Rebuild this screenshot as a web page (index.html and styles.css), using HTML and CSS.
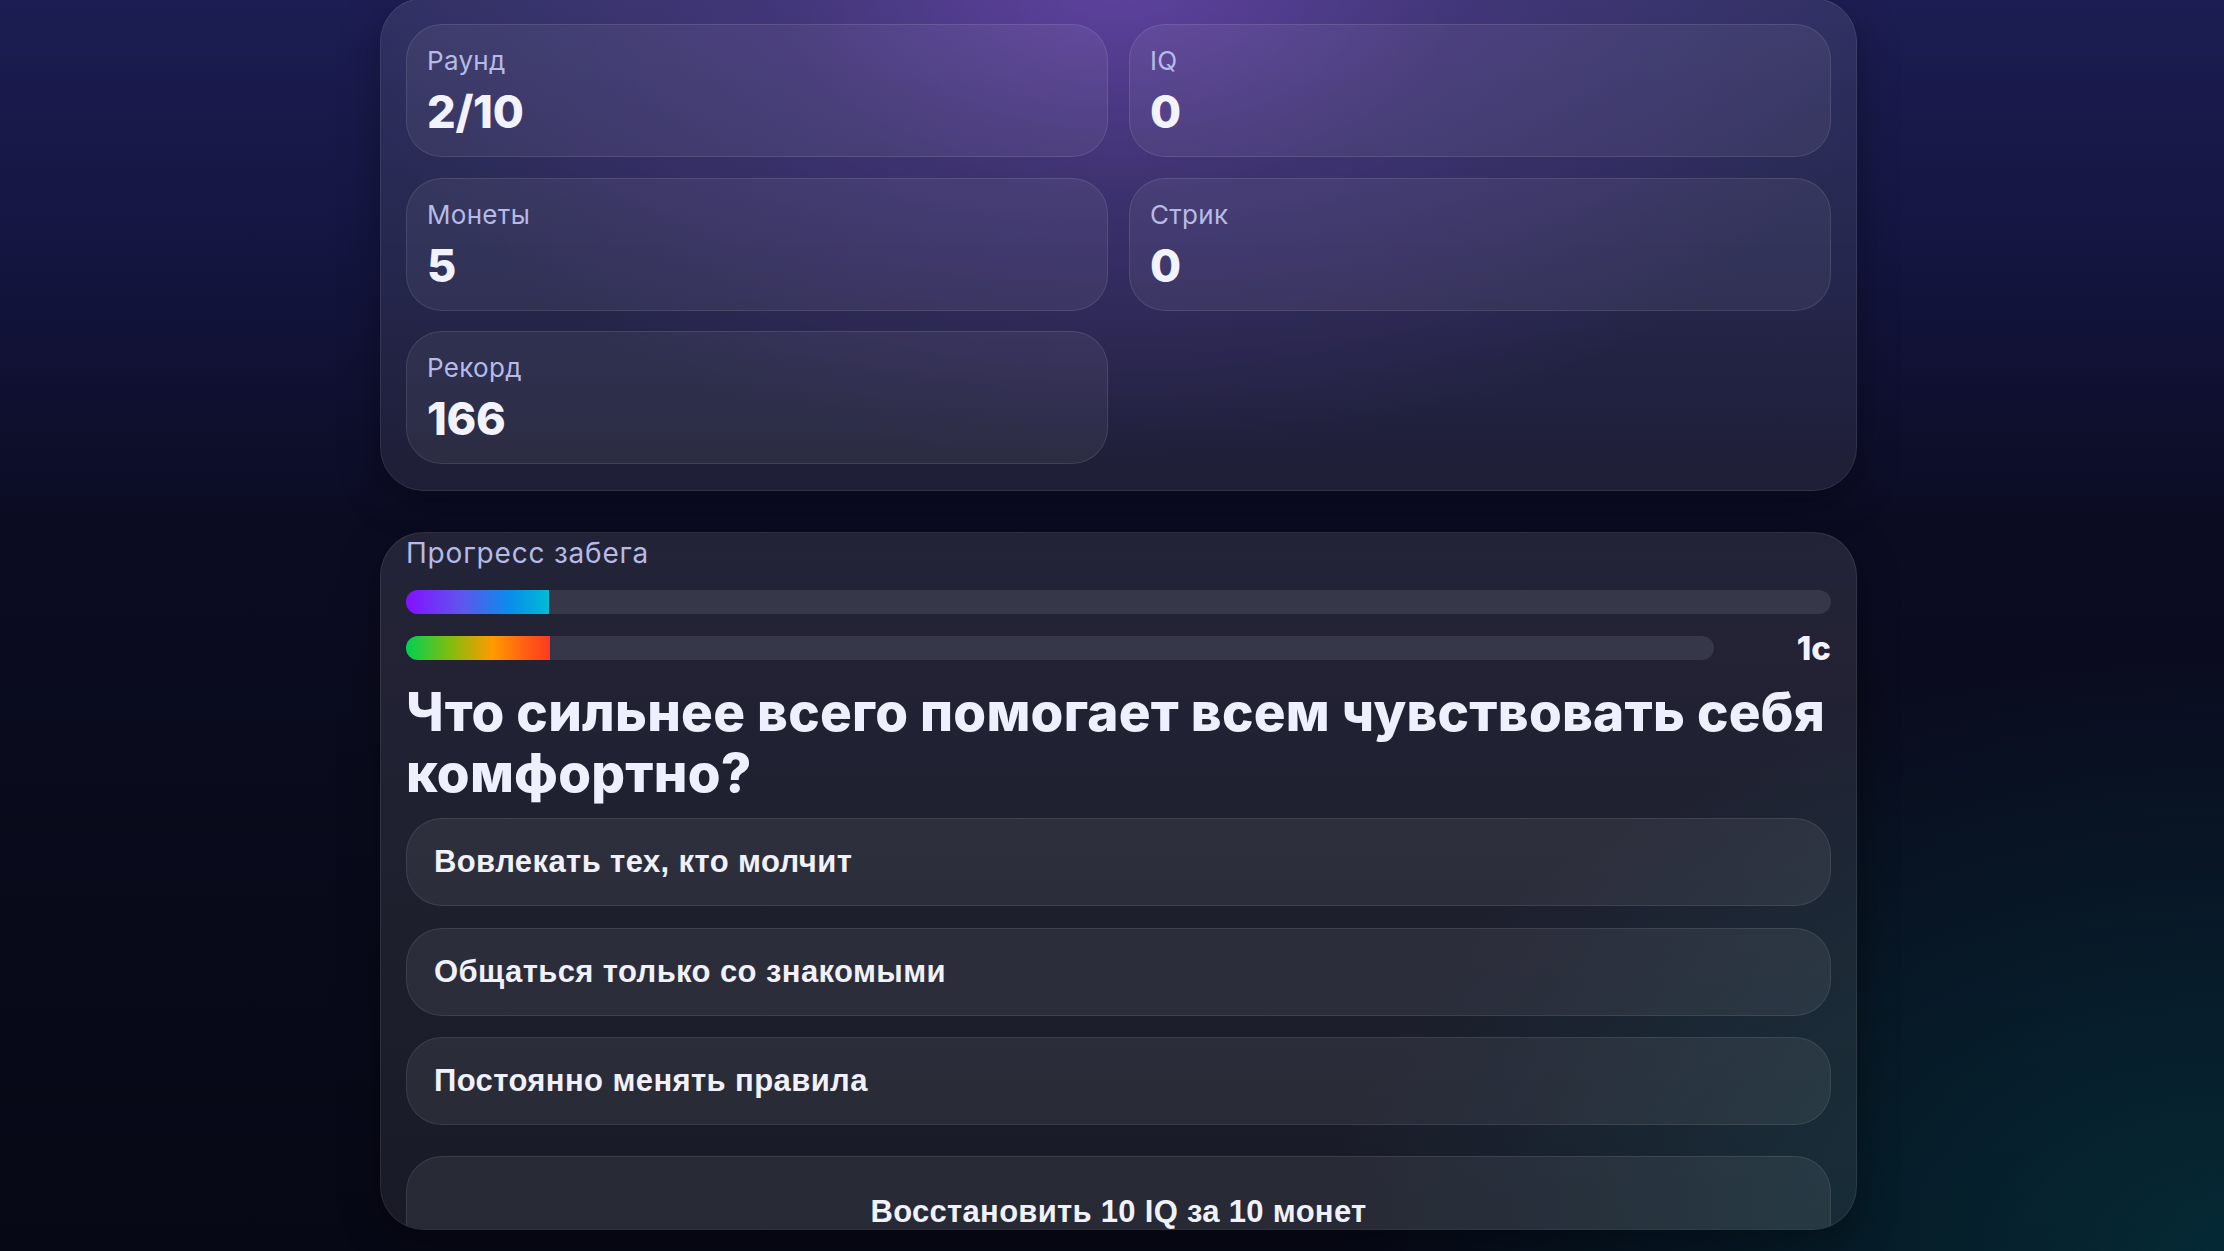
FILE: index.html
```html
<!DOCTYPE html>
<html lang="ru">
<head>
<meta charset="utf-8">
<title>Забег</title>
<link rel="stylesheet" href="styles.css">
</head>
<body>
<div class="page">
  <section class="panel stats">
    <div class="stat"><div class="stat-label">Раунд</div><div class="stat-value">2/10</div></div>
    <div class="stat"><div class="stat-label">IQ</div><div class="stat-value">0</div></div>
    <div class="stat"><div class="stat-label">Монеты</div><div class="stat-value">5</div></div>
    <div class="stat"><div class="stat-label">Стрик</div><div class="stat-value">0</div></div>
    <div class="stat"><div class="stat-label">Рекорд</div><div class="stat-value">166</div></div>
  </section>

  <section class="panel game">
    <div class="game-label">Прогресс забега</div>
    <div class="bar"><div class="bar-fill fill-run" style="width:10%"></div></div>
    <div class="timer-row">
      <div class="bar"><div class="bar-fill fill-time" style="width:11%"></div></div>
      <span class="timer">1с</span>
    </div>
    <h2 class="question">Что сильнее всего помогает всем чувствовать себя комфортно?</h2>
    <div class="options">
      <button class="option">Вовлекать тех, кто молчит</button>
      <button class="option">Общаться только со знакомыми</button>
      <button class="option">Постоянно менять правила</button>
    </div>
    <button class="restore">Восстановить 10 IQ за 10 монет</button>
  </section>
</div>
</body>
</html>
```

FILE: styles.css
```css
* { box-sizing: border-box; }

html, body {
  margin: 0;
  height: 100%;
}

body {
  width: 2224px;
  height: 1251px;
  overflow: hidden;
  font-family: Inter, "Noto Sans", sans-serif;
  color: #f0f2ff;
  background:
    radial-gradient(ellipse 780px 480px at 1118px -20px, rgba(118, 62, 200, 0.58), rgba(118, 62, 200, 0.22) 45%, rgba(118, 62, 200, 0) 100%),
    radial-gradient(ellipse 900px 600px at 2224px 1251px, rgba(4, 64, 74, 0.6), rgba(4, 64, 74, 0) 100%),
    linear-gradient(180deg, #1c1d52 0%, #141540 20%, #0b0c22 42%, #090b1c 65%, #060815 100%);
}

.page {
  width: 1477px;
  margin: -2px 0 0 380px;
  display: flex;
  flex-direction: column;
  gap: 41px;
}

.panel {
  border-radius: 44px;
  border: 1px solid rgba(255, 255, 255, 0.08);
  background: linear-gradient(180deg, rgba(255, 255, 255, 0.085), rgba(255, 255, 255, 0.075));
  box-shadow: 0 10px 40px rgba(0, 0, 0, 0.35);
}

.stats {
  padding: 25px 25px 26px;
  display: grid;
  grid-template-columns: 1fr 1fr;
  column-gap: 21px;
  row-gap: 20.5px;
}

.stat {
  border-radius: 36px;
  border: 1px solid rgba(255, 255, 255, 0.1);
  background: rgba(255, 255, 255, 0.06);
  padding: 21px 20px 17px;
}

.stat-label {
  font-size: 26px;
  line-height: 30px;
  letter-spacing: 0.3px;
  color: #b6bae6;
  margin-bottom: 9px;
}

.stat-value {
  font-size: 45px;
  line-height: 54px;
  font-weight: 800;
  color: #f2f3ff;
  letter-spacing: -0.3px;
}

.game {
  height: 698px;
  overflow: hidden;
  padding: 4px 25px 0;
  background: linear-gradient(180deg, rgba(255, 255, 255, 0.1), rgba(255, 255, 255, 0.075));
}

.game-label {
  font-size: 28px;
  line-height: 32px;
  letter-spacing: 0.8px;
  color: #b6bae6;
  margin-bottom: 21px;
}

.bar {
  height: 24px;
  border-radius: 12px;
  background: #363849;
  overflow: hidden;
}

.bar-fill {
  height: 100%;
}

.fill-run {
  background: linear-gradient(90deg, #8410ff 0%, #5d57ee 40%, #0b8cec 72%, #00bcd6 100%);
}

.fill-time {
  background: linear-gradient(90deg, #00d052 0%, #7fbd10 30%, #ff9a00 60%, #ff5a14 85%, #ff3a20 100%);
}

.timer-row {
  margin-top: 16px;
  display: grid;
  grid-template-columns: 1fr 101px;
  gap: 16px;
  align-items: center;
  height: 36px;
}

.timer {
  text-align: right;
  font-size: 33px;
  line-height: 36px;
  font-weight: 800;
  color: #f2f3ff;
}

.question {
  margin: 16px 0 14px;
  font-size: 53px;
  line-height: 61px;
  font-weight: 800;
  letter-spacing: 0.25px;
  color: #eef0ff;
}

.options {
  display: flex;
  flex-direction: column;
  gap: 21.5px;
}

.option,
.restore {
  display: block;
  width: 100%;
  text-align: left;
  font-family: "Liberation Sans", Arial, sans-serif;
  font-weight: 700;
  font-size: 31px;
  line-height: 32px;
  letter-spacing: 0.4px;
  color: #f0f1fb;
  border-radius: 36px;
  border: 1px solid rgba(255, 255, 255, 0.09);
  background: rgba(255, 255, 255, 0.065);
  padding: 27px 27px;
  height: 88px;
}

.restore {
  margin-top: 31px;
  height: 140px;
  padding: 39px 27px 0;
  display: flex;
  justify-content: center;
  align-items: flex-start;
  letter-spacing: 0.3px;
}
```
